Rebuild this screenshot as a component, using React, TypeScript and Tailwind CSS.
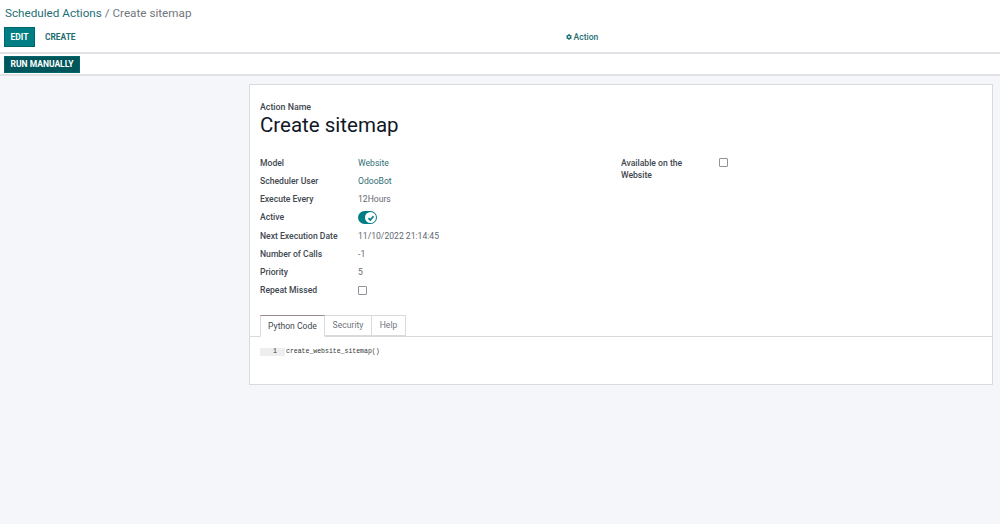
import { FaCog } from 'react-icons/fa'

const fields = [
    { label: 'Model', value: 'Website', link: true },
    { label: 'Scheduler User', value: 'OdooBot', link: true },
    { label: 'Execute Every', value: '12Hours' },
    { label: 'Active', toggle: true },
    { label: 'Next Execution Date', value: '11/10/2022 21:14:45' },
    { label: 'Number of Calls', value: '-1' },
    { label: 'Priority', value: '5' },
    { label: 'Repeat Missed', checkbox: true },
]

function Checkbox() {
    return <div className="w-[9px] h-[9px] border border-[#8f949b] bg-white rounded-[1px]" />
}

function Toggle() {
    return (
        <div className="w-[19px] h-[13px] rounded-full bg-[#017e84] flex items-center justify-end pr-[1px]">
            <div className="w-[11px] h-[11px] rounded-full bg-white flex items-center justify-center">
                <svg viewBox="0 0 10 10" className="w-[10px] h-[10px]">
                    <path d="M2.5 5.2 L4.3 7 L7.5 3.3" fill="none" stroke="#017e84" strokeWidth="1.7" />
                </svg>
            </div>
        </div>
    )
}

export default function App() {
    return (
        <div className="w-[1000px] h-[524px] overflow-hidden bg-[#f5f6fa] font-['Roboto',sans-serif] flex flex-col">
            {/* Control panel */}
            <div className="bg-white h-[54px] border-b-2 border-[#e2e2e6] flex flex-col shrink-0">
                <div className="pl-[5px] pt-[5px] h-[27px] text-[11.7px] leading-[16px] whitespace-nowrap">
                    <span className="text-[#1f6f75]">Scheduled Actions</span>
                    <span className="text-[#71767e]"> / Create sitemap</span>
                </div>
                <div className="flex items-center pl-[4px]">
                    <button className="w-[31px] h-[20px] bg-[#017e84] border border-[#01666b] text-white text-[8.5px] font-bold">EDIT</button>
                    <span className="ml-[10px] text-[#1f6f75] text-[8.4px] font-bold">CREATE</span>
                    <div className="ml-[490px] flex items-center gap-[2px] text-[#1f6f75] text-[8.5px] font-medium">
                        <FaCog className="w-[6px] h-[6px]" />
                        Action
                    </div>
                </div>
            </div>

            {/* Status bar */}
            <div className="bg-white h-[22px] border-b-2 border-[#e2e2e6] pl-[4px] flex items-start pt-[2px] shrink-0">
                <button className="w-[76px] h-[17px] bg-[#00565a] border border-[#01666b] text-white text-[8.5px] font-bold">RUN MANUALLY</button>
            </div>

            {/* Form sheet */}
            <div className="ml-[249px] mt-[8px] w-[744px] h-[301px] bg-white border border-[#d8dadd] shrink-0">
                <div className="pl-[10px] pt-[16px]">
                    <div className="text-[8.8px] leading-[12px] font-medium text-[#414750]">Action Name</div>
                    <div className="text-[20.5px] leading-[24px] text-[#111827]">Create sitemap</div>
                </div>

                <div className="flex pl-[10px] mt-[17px]">
                    <div className="w-[361px]">
                        {fields.map((field) => (
                            <div key={field.label} className="flex items-center h-[18.25px] text-[8.6px]">
                                <div className="w-[98px] font-medium text-[#414750]">{field.label}</div>
                                {field.toggle && <Toggle />}
                                {field.checkbox && <Checkbox />}
                                {field.value && (
                                    <div className={field.link ? 'text-[#2f6f75]' : 'text-[#636972]'}>{field.value}</div>
                                )}
                            </div>
                        ))}
                    </div>
                    <div className="flex items-start">
                        <div className="w-[98px] text-[8.6px] leading-[12px] font-medium text-[#414750] pt-[3px]">
                            Available on the<br />Website
                        </div>
                        <div className="pt-[4px]"><Checkbox /></div>
                    </div>
                </div>

                {/* Tabs */}
                <div className="mt-[15px] pl-[10px] flex h-[22px] border-b border-[#d8dadd] text-[8.6px]">
                    <div className="w-[65px] h-[22px] flex items-center justify-center bg-white border border-[#d8dadd] border-b-white border-t-[#9a8a96] text-[#414750]">Python Code</div>
                    <div className="w-[47px] h-[21px] flex items-center justify-center border border-[#d8dadd] border-l-0 text-[#71767e]">Security</div>
                    <div className="w-[34px] h-[21px] flex items-center justify-center border border-[#d8dadd] border-l-0 text-[#71767e]">Help</div>
                </div>

                {/* Code editor */}
                <div className="pl-[10px] mt-[11px] flex items-center h-[8px] font-['Liberation_Mono',monospace] text-[6.5px] text-[#333]">
                    <div className="w-[25px] h-[8px] bg-[#eeeeee] text-right pr-[8px] leading-[8px]">1</div>
                    <div className="pl-[1px]">create_website_sitemap()</div>
                </div>
            </div>
        </div>
    )
}
